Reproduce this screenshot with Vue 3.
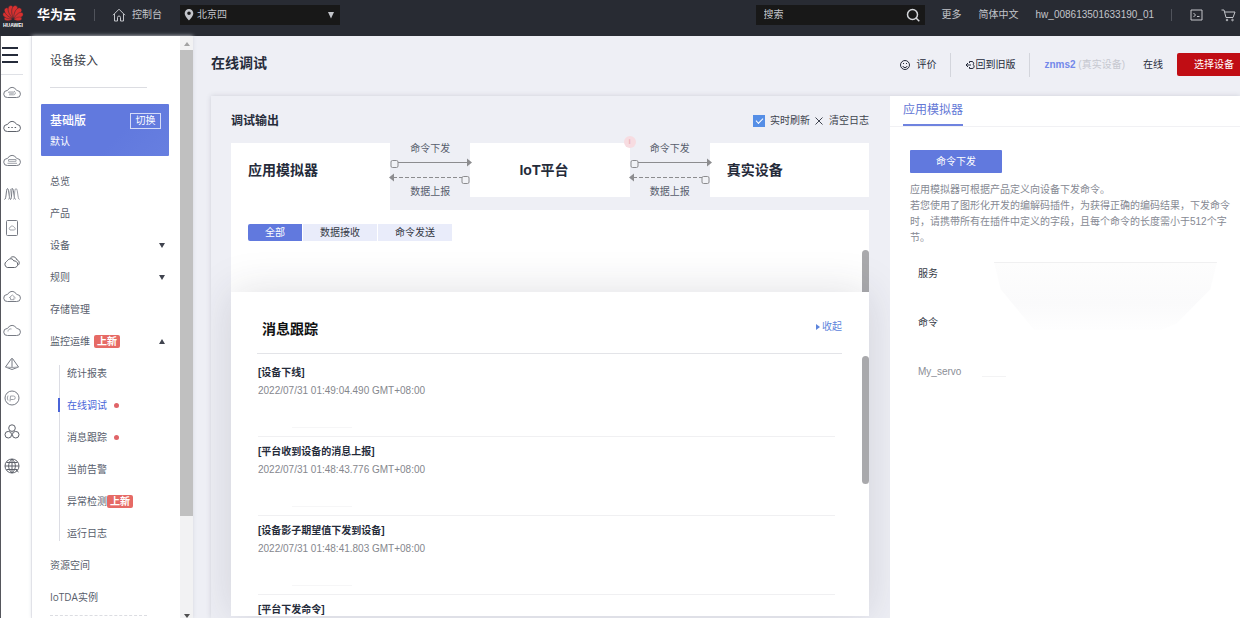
<script setup>
import { ref } from 'vue'

const cloud = 'M4.500 14.500a3.500 3.500 0 0 1-.5-7c.5 0 .8-.2 1-.6a4.600 4.600 0 0 1 8.200 0c.2.4.5.6 1 .6a3.500 3.500 0 0 1-.5 7z'
const railIcons = [
  { name: '弹性云服务器', paths: [cloud, 'M5.500 9h5l1.500-.8M6 11.800h4.500c1.500 0 2-1 2-2.300M5.500 9c0 1.500 3 1.500 6 1'] },
  { name: '云耀云服务器', paths: [cloud, 'M5 10.500h1.500M8.300 10.500h1.500M11.600 10.500h1.500'], strong: true },
  { name: '裸金属服务器', paths: [cloud, 'M5.500 8.500h7.500v1.800H5.500zM4.500 12.300h9.500'] },
  { name: '弹性伸缩', paths: ['M1.500 14.500C3.500 14.500 3 3.500 4.500 3.500s1.500 11 3 11 .8-11 2-11 1.500 11 3 11', 'M5.500 14.500c1.500 0 1-11 3-11M10.500 14.500c1.500 0 .5-11 2.500-11s1.500 11 3.500 11'] },
  { name: '云硬盘', paths: ['M4.500 1.500h9a1 1 0 0 1 1 1v13a1 1 0 0 1-1 1h-9a1 1 0 0 1-1-1v-13a1 1 0 0 1 1-1z', 'M7 11a2 2 0 0 1 .2-3 2.300 2.300 0 0 1 4 .3 1.500 1.500 0 0 1 .3 2.700z'] },
  { name: '云备份', paths: ['M4.300 14.500a3.300 3.300 0 0 1-.8-6C4.500 7.800 5 6.500 6.500 6c2-.8 3.500.2 4.200 1.800 2 0 4 1.200 4 3.400 0 2-1.500 3.300-3.200 3.300z', 'M7.500 4.800c2-2 5.500-1 6.300 2 2.700.8 3.200 4 1.200 5.500'], strong: true },
  { name: '虚拟私有云', paths: [cloud, 'M6 11 9.300 8l3.300 3M7.500 10.500v2.200h3.500v-2.200'] },
  { name: '对象存储服务', paths: [cloud, 'M5 10.500c0-2 1.500-3 3.500-2.500'] },
  { name: '弹性负载均衡', paths: ['M9 3v10M8.500 3.500 2.500 12 9 14.500 15.500 12 9.500 3.500', 'M2.500 12 9 12.500l6.500-.5'] },
  { name: '弹性公网IP', paths: ['M9 2a7 7 0 1 1 0 14A7 7 0 0 1 9 2z', 'M7 12.500 7.500 7H10.500a1.700 1.700 0 0 1 0 3.500H7.300M5 6.500a5 5 0 0 0 0 5'] },
  { name: '关系型数据库', paths: ['M9 1.800a3.300 3.300 0 1 1 0 6.600 3.300 3.300 0 0 1 0-6.600zM5.300 8.400a3.300 3.300 0 1 1 0 6.600 3.300 3.300 0 0 1 0-6.600zM12.700 8.400a3.300 3.300 0 1 1 0 6.600 3.300 3.300 0 0 1 0-6.600z'], strong: true },
  { name: '域名注册', paths: ['M9 2a7 7 0 1 1 0 14A7 7 0 0 1 9 2zM9 2v14M2 9h14M3.500 5.500h11M3.500 12.500h11M9 2c-4.500 4-4.500 10 0 14M9 2c4.500 4 4.500 10 0 14M12.500 12.500l3 2.500'], strong: true },
]

const menu = [
  { label: '总览' },
  { label: '产品' },
  { label: '设备', caret: 'down' },
  { label: '规则', caret: 'down' },
  { label: '存储管理' },
  {
    label: '监控运维', caret: 'up', badge: '上新',
    children: [
      { label: '统计报表' },
      { label: '在线调试', dot: true, active: true },
      { label: '消息跟踪', dot: true },
      { label: '当前告警' },
      { label: '异常检测', badge: '上新' },
      { label: '运行日志' },
    ],
  },
  { label: '资源空间' },
  { label: 'IoTDA实例' },
]

const tabs = ['全部', '数据接收', '命令发送']
const activeTab = ref('全部')
const live = ref(true)
const keyword = ref('')

const messages = [
  { title: '[设备下线]', time: '2022/07/31 01:49:04.490 GMT+08:00' },
  { title: '[平台收到设备的消息上报]', time: '2022/07/31 01:48:43.776 GMT+08:00' },
  { title: '[设备影子期望值下发到设备]', time: '2022/07/31 01:48:41.803 GMT+08:00' },
  { title: '[平台下发命令]' },
]
const petals = [
  { angle: -84, size: 0.62 },
  { angle: -58, size: 0.82 },
  { angle: -34, size: 0.96 },
  { angle: -11, size: 1 },
  { angle: 11, size: 1 },
  { angle: 34, size: 0.96 },
  { angle: 58, size: 0.82 },
  { angle: 84, size: 0.62 },
]
</script>

<template>
  <div class="page">
    <header class="topbar">
      <svg class="logo" viewBox="0 0 24 26" role="img" aria-label="HUAWEI">
        <path v-for="p in petals" :key="p.angle" d="M0-1C-3-6-3.800-10-2.200-13-1.200-14.600 1.200-14.600 2.200-13 3.800-10 3-6 0-1z" fill="#d8302f" stroke="#282b33" stroke-width=".5" :transform="`translate(12 17.500) rotate(${p.angle}) scale(${p.size})`" />
        <text x="12" y="25" text-anchor="middle" font-size="5" font-weight="700" fill="#fff">HUAWEI</text>
      </svg>
      <strong class="brand">华为云</strong>
      <i class="bar-line"></i>
      <a class="console" href="#">
        <svg viewBox="0 0 14 14"><path d="M1 7.200 7 1.200l6 6M2.500 6v7H5.500V9.500a1.500 1.500 0 0 1 3 0V13h3V6" /></svg>
        控制台
      </a>
      <div class="region">
        <svg class="pin" viewBox="0 0 10 12"><path fill-rule="evenodd" d="M5 0a4.300 4.300 0 0 0-4.300 4.300C.7 7.500 5 11.500 5 11.500s4.300-4 4.300-7.200A4.300 4.300 0 0 0 5 0zm0 2.500a1.800 1.800 0 1 1 0 3.600 1.800 1.800 0 0 1 0-3.600z" /></svg>
        <select aria-label="区域"><option>北京四</option></select>
        <svg class="caret" viewBox="0 0 8 8"><path d="M1 1h6L4 7.500z" /></svg>
      </div>
      <span class="spacer"></span>
      <form class="search" @submit.prevent>
        <input v-model="keyword" type="text" placeholder="搜索" aria-label="搜索" />
        <button type="submit" aria-label="搜索"><svg viewBox="0 0 14 14"><circle cx="6.500" cy="6.500" r="5" /><path d="m10 10 3.300 3.300" /></svg></button>
      </form>
      <nav class="links">
        <a href="#">更多</a>
        <a href="#">简体中文</a>
        <a href="#">hw_008613501633190_01</a>
      </nav>
      <i class="bar-line"></i>
      <div class="tools">
        <button aria-label="命令行"><svg viewBox="0 0 14 14"><path d="M1.500 2h11v10h-11zM4 5l2 2-2 2M7.500 8.500H10" /></svg></button>
        <button aria-label="购物车"><svg viewBox="0 0 14 14"><path d="M0 2h2.500l2 7.500h7L13.500 4H3.200" /><circle cx="5.500" cy="12" r=".8" /><circle cx="11" cy="12" r=".8" /></svg></button>
      </div>
    </header>

    <div class="body">
      <nav class="rail" aria-label="服务列表">
        <button class="burger" aria-label="菜单"><i></i><i></i><i></i></button>
        <a v-for="icon in railIcons" :key="icon.name" href="#" :aria-label="icon.name" :class="{ strong: icon.strong }">
          <svg viewBox="0 0 18 18"><path v-for="(d, i) in icon.paths" :key="i" :d="d" :class="{ inner: i > 0 }" /></svg>
        </a>
      </nav>

      <aside class="side">
        <div class="side-content">
          <h2>设备接入</h2>
          <section class="edition">
            <div class="edition-row"><strong>基础版</strong><button>切换</button></div>
            <span>默认</span>
          </section>
          <ul class="menu">
            <li v-for="item in menu" :key="item.label">
              <a href="#">
                {{ item.label }}<em v-if="item.badge" class="badge gap">{{ item.badge }}</em>
                <svg v-if="item.caret" :class="['fold', item.caret]" viewBox="0 0 6 5"><path d="M0 0h6L3 5z" /></svg>
              </a>
              <ul v-if="item.children" class="submenu">
                <li v-for="sub in item.children" :key="sub.label">
                  <a href="#" :class="{ active: sub.active }">{{ sub.label }}<em v-if="sub.badge" class="badge">{{ sub.badge }}</em><i v-if="sub.dot" class="dot"></i></a>
                </li>
              </ul>
            </li>
          </ul>
          <div class="dashes"></div>
        </div>
        <div class="scrollbar">
          <svg class="up" viewBox="0 0 6 4"><path d="M0 4h6L3 0z" /></svg>
          <i></i>
          <svg class="down" viewBox="0 0 6 4"><path d="M0 0h6L3 4z" /></svg>
        </div>
      </aside>

      <main>
        <div class="page-head">
          <h1>在线调试</h1>
          <a class="rate" href="#"><svg viewBox="0 0 12 12"><circle cx="6" cy="6" r="4.500" /><path d="M4.500 4v1M7.500 4v1M3.800 7a2.300 2.300 0 0 0 4.400 0" /></svg>评价</a>
          <i class="head-line"></i>
          <a class="back" href="#"><svg viewBox="0 0 10 10"><path d="M6 5H1M3 3 1 5l2 2M4.500 3V1.500H7a2 2 0 0 1 1.200 3.300A2 2 0 0 1 7 8.500H4.500V7" /></svg>回到旧版</a>
          <i class="head-line"></i>
          <span class="device"><b>znms2</b> (真实设备)</span>
          <span class="state">在线</span>
          <button class="choose">选择设备</button>
        </div>

        <div class="workspace">
          <section class="debug">
            <div class="debug-head">
              <h2>调试输出</h2>
              <label><input v-model="live" type="checkbox" />实时刷新</label>
              <button class="clear"><svg viewBox="0 0 8 8"><path d="m0.500 0.500 7 7M7.500.5l-7 7" /></svg>清空日志</button>
            </div>

            <div class="flow">
              <div class="node first">应用模拟器</div>
              <div v-for="n in 2" :key="n" class="link" :class="`link-${n}`">
                <span>命令下发</span>
                <svg viewBox="0 0 80 32">
                  <path d="M8 8.500h70" /><path class="fill" d="M77 4.500v8l5-4z" />
                  <rect x="1" y="6.500" width="7" height="7" rx="1.500" />
                  <path d="M3 23.500h69" stroke-dasharray="4 2" /><path class="fill" d="M4 19.500v8l-5-4z" />
                  <rect x="72" y="22.500" width="7" height="7" rx="1.500" />
                </svg>
                <span>数据上报</span>
              </div>
              <div class="node middle">IoT平台<i class="hint">i</i></div>
              <div class="node last">真实设备</div>
            </div>

            <div class="log">
              <div class="tabs">
                <button v-for="tab in tabs" :key="tab" :class="{ on: tab === activeTab }" @click="activeTab = tab">{{ tab }}</button>
              </div>
              <i class="thumb"></i>
            </div>

            <section class="trace">
              <header>
                <h2>消息跟踪</h2>
                <button><svg viewBox="0 0 4 6"><path d="M0 0v6l4-3z" /></svg>收起</button>
              </header>
              <ul>
                <li v-for="m in messages" :key="m.title">
                  <strong>{{ m.title }}</strong>
                  <template v-if="m.time">
                    <time>{{ m.time }}</time>
                    <i class="stub"></i>
                  </template>
                </li>
              </ul>
              <i class="thumb"></i>
            </section>
          </section>

          <aside class="simulator">
            <div class="sim-tabs"><button>应用模拟器</button></div>
            <div class="sim-body">
              <button class="send">命令下发</button>
              <p>应用模拟器可根据产品定义向设备下发命令。<br />若您使用了图形化开发的编解码插件，为获得正确的编码结果，下发命令时，请携带所有在插件中定义的字段，且每个命令的长度需小于512个字节。</p>
              <dl>
                <div><dt>服务</dt><dd class="shade"></dd></div>
                <div><dt>命令</dt></div>
                <div><dt class="muted">My_servo</dt><dd class="rule"></dd></div>
              </dl>
            </div>
          </aside>
        </div>
      </main>
    </div>
  </div>
</template>

<style>
body {
  margin: 0;
  overflow: hidden;
}
</style>

<style scoped>
.page {
  height: 100vh;
  display: flex;
  flex-direction: column;
  overflow: hidden;
  background: #eeeff5;
  color: #40444f;
  font: 10px/16px "Liberation Sans", "Noto Sans CJK SC", sans-serif;
}
.page * { box-sizing: border-box; }
h1, h2, p, ul, dl, dd { margin: 0; padding: 0; }
ul { list-style: none; }
a { color: inherit; text-decoration: none; }
em, i { font-style: normal; }
button, input, select {
  font: inherit;
  color: inherit;
  border: 0;
  margin: 0;
  padding: 0;
  background: none;
}
button { cursor: pointer; white-space: nowrap; }
svg { display: block; flex: none; fill: none; }

/* top bar */
.topbar {
  flex: none;
  display: flex;
  align-items: center;
  height: 36px;
  padding: 0 4px 7px 1px;
  background: #282b33;
  color: #c3c5ca;
  white-space: nowrap;
}
.logo { width: 24px; height: 26px; }
.brand { margin-left: 12px; font-size: 13px; color: #fff; }
.bar-line { width: 1px; height: 12px; background: #50535b; }
.brand + .bar-line { margin: 0 17px 0 18px; }
.console { display: flex; align-items: center; gap: 6px; }
.console svg { width: 14px; height: 14px; stroke: #c3c5ca; }
.region {
  display: flex;
  align-items: center;
  width: 160px;
  height: 20px;
  margin-left: 18px;
  padding: 0 5px 0 4px;
  background: #181818;
}
.pin { width: 10px; height: 12px; fill: #c3c5ca; }
.region select { flex: 1; appearance: none; padding-left: 3px; outline: none; }
.caret { width: 8px; height: 8px; fill: #c3c5ca; }
.spacer { flex: 1; }
.search {
  display: flex;
  align-items: center;
  width: 169px;
  height: 20px;
  padding: 0 5px 0 8px;
  background: #181818;
}
.search input { flex: 1; min-width: 0; outline: none; }
.search input::placeholder { color: #c3c5ca; opacity: 1; }
.search svg { width: 14px; height: 14px; stroke: #d4d6da; stroke-width: 1.500; }
.links { display: flex; gap: 17px; margin: 0 17px; }
.tools { display: flex; gap: 17px; margin-left: 17px; }
.tools svg { width: 15px; height: 14px; stroke: #c3c5ca; }

.body { flex: 1; display: flex; min-height: 0; }

/* icon rail */
.rail {
  flex: none;
  display: flex;
  flex-direction: column;
  align-items: center;
  width: 32px;
  padding-right: 8px;
  background: #fff;
  border-left: 1px solid #55565c;
  border-right: 1px solid #e9e9ee;
}
.burger {
  display: flex;
  flex-direction: column;
  justify-content: center;
  gap: 5px;
  align-self: stretch;
  height: 39px;
  padding-left: 1px;
  border-bottom: 1px solid #dfe1e6;
}
.burger i { width: 16px; height: 2px; background: #252b3a; }
.rail a { display: grid; place-items: center; height: 34px; }
.rail svg { width: 18px; height: 18px; stroke: #777b84; stroke-width: 1; }
.rail .inner { stroke: #a0a3aa; }
.rail .strong svg, .rail .strong .inner { stroke: #5d616a; }

/* side menu */
.side { flex: none; display: flex; width: 161px; background: #fff; box-shadow: 0 0 4px #d5d7df; }
.side-content { flex: 1; padding: 0 11px 0 9px; overflow: hidden; }
.side h2 {
  margin: 0 22px 16px 9px;
  padding: 16px 0 17px;
  border-bottom: 1px solid #dcdde2;
  font-size: 12px;
  line-height: 18px;
  font-weight: 400;
  color: #3b3f49;
}
.edition {
  height: 52px;
  padding: 8px 8px 0 9px;
  border-radius: 1px;
  background: linear-gradient(135deg, #6179de 60%, #677fe0);
  color: #fff;
}
.edition-row { display: flex; justify-content: space-between; align-items: center; height: 17px; margin-bottom: 5px; }
.edition strong { font-size: 12px; font-weight: 500; }
.edition button { width: 31px; height: 16px; line-height: 14px; border: 1px solid #d5dbf7; }
.menu { margin: 9px 0 0 9px; }
.menu a {
  display: flex;
  align-items: center;
  height: 32px;
  padding-right: 4px;
  font-family: "Open Sans", "Noto Sans CJK SC", sans-serif;
  color: #575d6c;
  white-space: nowrap;
}
.fold { width: 6px; height: 5px; margin-left: auto; fill: #40444f; }
.fold.up { transform: rotate(180deg); }
.badge {
  height: 13px;
  padding: 0 3px;
  border-radius: 2px;
  background: #e66a65;
  color: #fff;
  font-weight: 700;
  line-height: 13px;
}
.gap { margin-left: 4px; }
.submenu { position: relative; margin-left: 9px; }
.submenu::before { content: ""; position: absolute; top: 8px; bottom: 8px; left: 0; width: 1px; background: #dcdde4; }
.submenu a { position: relative; padding-left: 8px; }
.submenu a.active { color: #4a64d8; }
.submenu a.active::before { content: ""; position: absolute; left: -1px; top: 9px; width: 2px; height: 14px; background: #4a64d8; }
.dot { width: 5px; height: 5px; margin-left: 7px; border-radius: 50%; background: #e06468; }
.dashes { margin: 2px 22px 0 9px; border-top: 1px dashed #dcdde2; }
.scrollbar { display: flex; flex-direction: column; align-items: center; width: 13px; background: #f2f2f3; }
.scrollbar i { flex: 465; width: 100%; background: #c0c0c0; }
.scrollbar::after { content: ""; order: 1; flex: 98; }
.scrollbar svg { width: 6px; height: 4px; }
.scrollbar .up { margin: 6px 0 4px; fill: #a3a3a3; }
.scrollbar .down { order: 2; fill: #505050; }

/* page */
main { flex: 1; min-width: 0; display: flex; flex-direction: column; }
.page-head { display: flex; align-items: center; height: 57px; flex: none; margin-bottom: 3px; padding-left: 18px; white-space: nowrap; color: #252b3a; }
h1 { flex: 1; font-size: 14px; line-height: 20px; padding-bottom: 4px; }
.page-head a { display: flex; align-items: center; }
.rate svg { width: 12px; height: 12px; margin-right: 5px; stroke: #252b3a; }
.back svg { width: 10px; height: 10px; stroke: #252b3a; }
.head-line { width: 1px; height: 24px; margin: 0 14px; background: #d3d5dc; }
.device { color: #c6c8d0; }
.device b { color: #7388ea; }
.state { margin: 0 14px 0 18px; }
.choose { height: 23px; padding: 0 6px 0 17px; border-radius: 2px 0 0 2px; background: #c00d14; color: #fff; }

.workspace { flex: 1; display: flex; min-height: 0; margin-left: 18px; box-shadow: 0 0 5px #cdcfd8; }
.debug { flex: 1; min-width: 0; display: flex; flex-direction: column; padding: 0 21px 2px 20px; background: #eeeff5; overflow: hidden; }
.debug-head { flex: none; display: flex; align-items: center; height: 47px; padding-top: 3px; color: #40444f; }
.debug-head h2 { flex: 1; font-size: 12px; color: #252b3a; }
.debug-head label { display: flex; align-items: center; gap: 5px; }
.debug-head input { appearance: none; display: grid; place-items: center; width: 12px; height: 12px; background: #c5cbe0; }
.debug-head input:checked { background: #558ee6; }
.debug-head input:checked::after { content: ""; width: 6px; height: 3px; margin-bottom: 2px; border: solid #fff; border-width: 0 0 1px 1px; transform: rotate(-45deg); }
.clear { display: flex; align-items: center; gap: 6px; margin-left: 5px; }
.clear svg { width: 8px; height: 8px; stroke: #40444f; }

.flow { flex: none; display: grid; grid-template-columns: 1fr 80px 1fr 80px 1fr; height: 67px; }
.node { height: 54px; background: #fff; font-size: 14px; font-weight: 700; line-height: 54px; padding: 0 17px; color: #252b3a; white-space: nowrap; }
.first { height: 67px; grid-area: 1 / 1; }
.middle { position: relative; grid-area: 1 / 3; padding: 0 12px 0 0; text-align: center; }
.last { grid-area: 1 / 5; }
.link { display: flex; flex-direction: column; align-items: center; height: 54px; color: #575d6c; }
.link-1 { grid-area: 1 / 2; }
.link-2 { grid-area: 1 / 4; }
.link span { line-height: 11px; }
.link svg { position: relative; z-index: 1; width: 80px; height: 32px; overflow: visible; stroke: #8c8c8f; }
.link .fill { fill: #8c8c8f; stroke: none; }
.link rect { fill: #f1f2f6; }
.hint { position: absolute; right: -6px; top: -7px; width: 12px; height: 12px; border-radius: 50%; background: #f7dce1; color: #eeb5be; font-size: 8px; line-height: 12px; }

.log { position: relative; flex: none; height: 82px; padding: 14px 17px; background: #fff; }
.tabs { display: flex; gap: 1px; }
.tabs button { height: 17px; padding: 0 17px; background: #e9ecfa; color: #353945; }
.tabs .on { background: #6179de; color: #fff; border-radius: 2px 0 0 2px; }
.thumb { position: absolute; right: 0; width: 7px; background: #a9a9ac; }
.log .thumb { top: 40px; bottom: 0; border-radius: 4px 4px 0 0; }

.trace { position: relative; flex: 1; min-height: 0; overflow: hidden; padding: 0 27px 0 26px; background: #fff; box-shadow: 0 0 40px rgba(40, 42, 60, .15); }
.trace header { display: flex; align-items: center; justify-content: space-between; height: 62px; border-bottom: 1px solid #e3e4e8; }
.trace h2 { margin: 12px 0 0 5px; font-size: 14px; line-height: 20px; color: #111; }
.trace header button { display: flex; align-items: center; gap: 2px; margin-top: 8px; color: #5c84dc; }
.trace header svg { width: 4px; height: 6px; fill: #5c84dc; }
.trace ul { padding: 4px 7px 0 1px; }
.trace li { height: 79px; padding-top: 7px; border-bottom: 1px solid #f0f0f2; }
.trace li:last-child { height: 24px; border: 0; }
.trace strong { display: block; color: #252b3a; }
.trace time { display: block; margin-top: 2px; color: #85878d; }
.stub { display: block; width: 60px; height: 1px; margin: 28px 0 0 34px; background: #f6f6f7; }
.trace .thumb { top: 64px; height: 128px; border-radius: 4px; }

.simulator { position: relative; flex: none; width: 350px; background: #fff; }
.sim-tabs { height: 31px; padding-left: 13px; border-bottom: 1px solid #f1f1f4; }
.sim-tabs button { height: 30px; padding-bottom: 1px; border-bottom: 2px solid #6f83df; font-size: 12px; color: #6478d6; }
.sim-body { padding: 23px 7px 0 20px; }
.send { display: block; width: 92px; height: 23px; border-radius: 1px; background: #6179de; color: #fff; }
.sim-body p { margin-top: 9px; color: #868993; }
dl { margin: 3px 0 0 8px; color: #353945; }
dl div { position: relative; display: flex; align-items: center; height: 49px; }
dt { width: 64px; }
.muted { color: #8b8e96; }
.shade {
  position: absolute;
  left: 76px;
  right: 16px;
  top: 13px;
  height: 68px;
  border-top: 1px solid #f0f0f1;
  background: linear-gradient(#fdfdfd, #fafafb 60%, #fefefe);
  clip-path: polygon(0 0, 100% 0, 97% 40%, 82% 90%, 75% 100%, 18% 100%, 3% 40%);
}
.rule { width: 24px; height: 1px; margin-top: 10px; background: #f3f3f4; }
</style>
